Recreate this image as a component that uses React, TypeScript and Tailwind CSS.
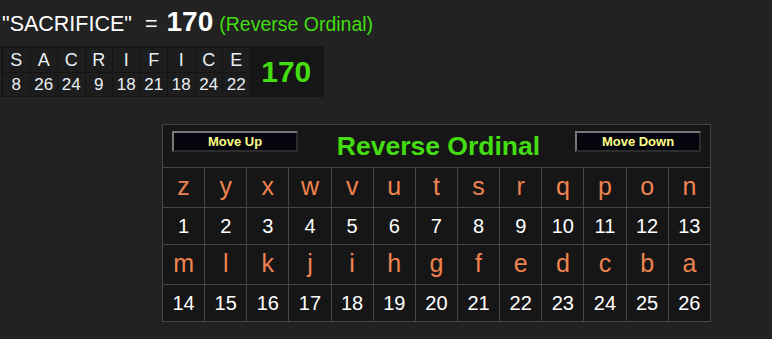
const word = ['S', 'A', 'C', 'R', 'I', 'F', 'I', 'C', 'E'];
const values = [8, 26, 24, 9, 18, 21, 18, 24, 22];
const letters = 'zyxwvutsrqponmlkjihgfedcba'.split('');

function MoveButton({ label }: { label: string }) {
  return (
    <button
      type="button"
      className="w-[126px] h-[21px] bg-[#05050d] border-2 border-t-[#787878] border-l-[#787878] border-b-[#2c2c2c] border-r-[#2c2c2c] text-[13px] font-bold text-[#ffff88] leading-none"
    >
      {label}
    </button>
  );
}

function LetterRow({ chars }: { chars: string[] }) {
  return (
    <tr className="h-[40px]">
      {chars.map((c, i) => (
        <td key={i} className="w-[42px] border border-[#444] text-center text-[25px] text-[#ee8350] leading-none pb-[2px]">
          {c}
        </td>
      ))}
    </tr>
  );
}

function NumberRow({ start }: { start: number }) {
  return (
    <tr className="h-[37px]">
      {Array.from({ length: 13 }, (_, i) => (
        <td key={i} className="w-[42px] border border-[#444] text-center text-[20px] text-white leading-none">
          {start + i}
        </td>
      ))}
    </tr>
  );
}

export default function App() {
  return (
    <div className="w-[772px] h-[339px] bg-[#222222] text-white font-['Liberation_Sans',Arial,sans-serif] overflow-hidden">
      <div className="pt-[8px] pl-[2px] flex items-baseline h-[38px] leading-none">
        <span className="text-[21.5px]">"SACRIFICE"</span>
        <span className="text-[21.5px] ml-[13px]">=</span>
        <span className="text-[28px] font-bold ml-[9px]">170</span>
        <span className="text-[19.5px] text-[#44dd11] ml-[6px]">(Reverse Ordinal)</span>
      </div>

      <div className="ml-[1px] mt-[8px] flex w-[323px] h-[51px] bg-[#161616]">
        <table className="border-collapse ml-[1px] my-[1px]">
          <tbody>
            <tr className="h-[25px]">
              {word.map((c, i) => (
                <td key={i} className="w-[27.5px] bg-[#1d1d1d] border border-[#141414] text-center text-[18px] text-[#e8f0f6] leading-none">
                  {c}
                </td>
              ))}
            </tr>
            <tr className="h-[24px]">
              {values.map((v, i) => (
                <td key={i} className="bg-[#1d1d1d] border border-[#141414] text-center text-[17px] text-[#e8f0f6] leading-none px-[1px]">
                  {v}
                </td>
              ))}
            </tr>
          </tbody>
        </table>
        <div className="flex-1 flex items-center justify-center text-[30px] font-bold text-[#44dd11] pr-[2px]">170</div>
      </div>

      <div className="ml-[162px] mt-[27px]">
        <table className="border-collapse bg-[#161616] border border-[#444] w-[549px] table-fixed">
          <tbody>
            <tr className="h-[43px]">
              <td colSpan={13} className="border border-[#444] px-[9px] pt-[6px] align-top">
                <div className="flex items-start justify-between">
                  <MoveButton label="Move Up" />
                  <span className="text-[26.5px] font-bold text-[#44dd11] ml-[4px] mt-[2px] leading-none">Reverse Ordinal</span>
                  <MoveButton label="Move Down" />
                </div>
              </td>
            </tr>
            <LetterRow chars={letters.slice(0, 13)} />
            <NumberRow start={1} />
            <LetterRow chars={letters.slice(13)} />
            <NumberRow start={14} />
          </tbody>
        </table>
      </div>
    </div>
  );
}
